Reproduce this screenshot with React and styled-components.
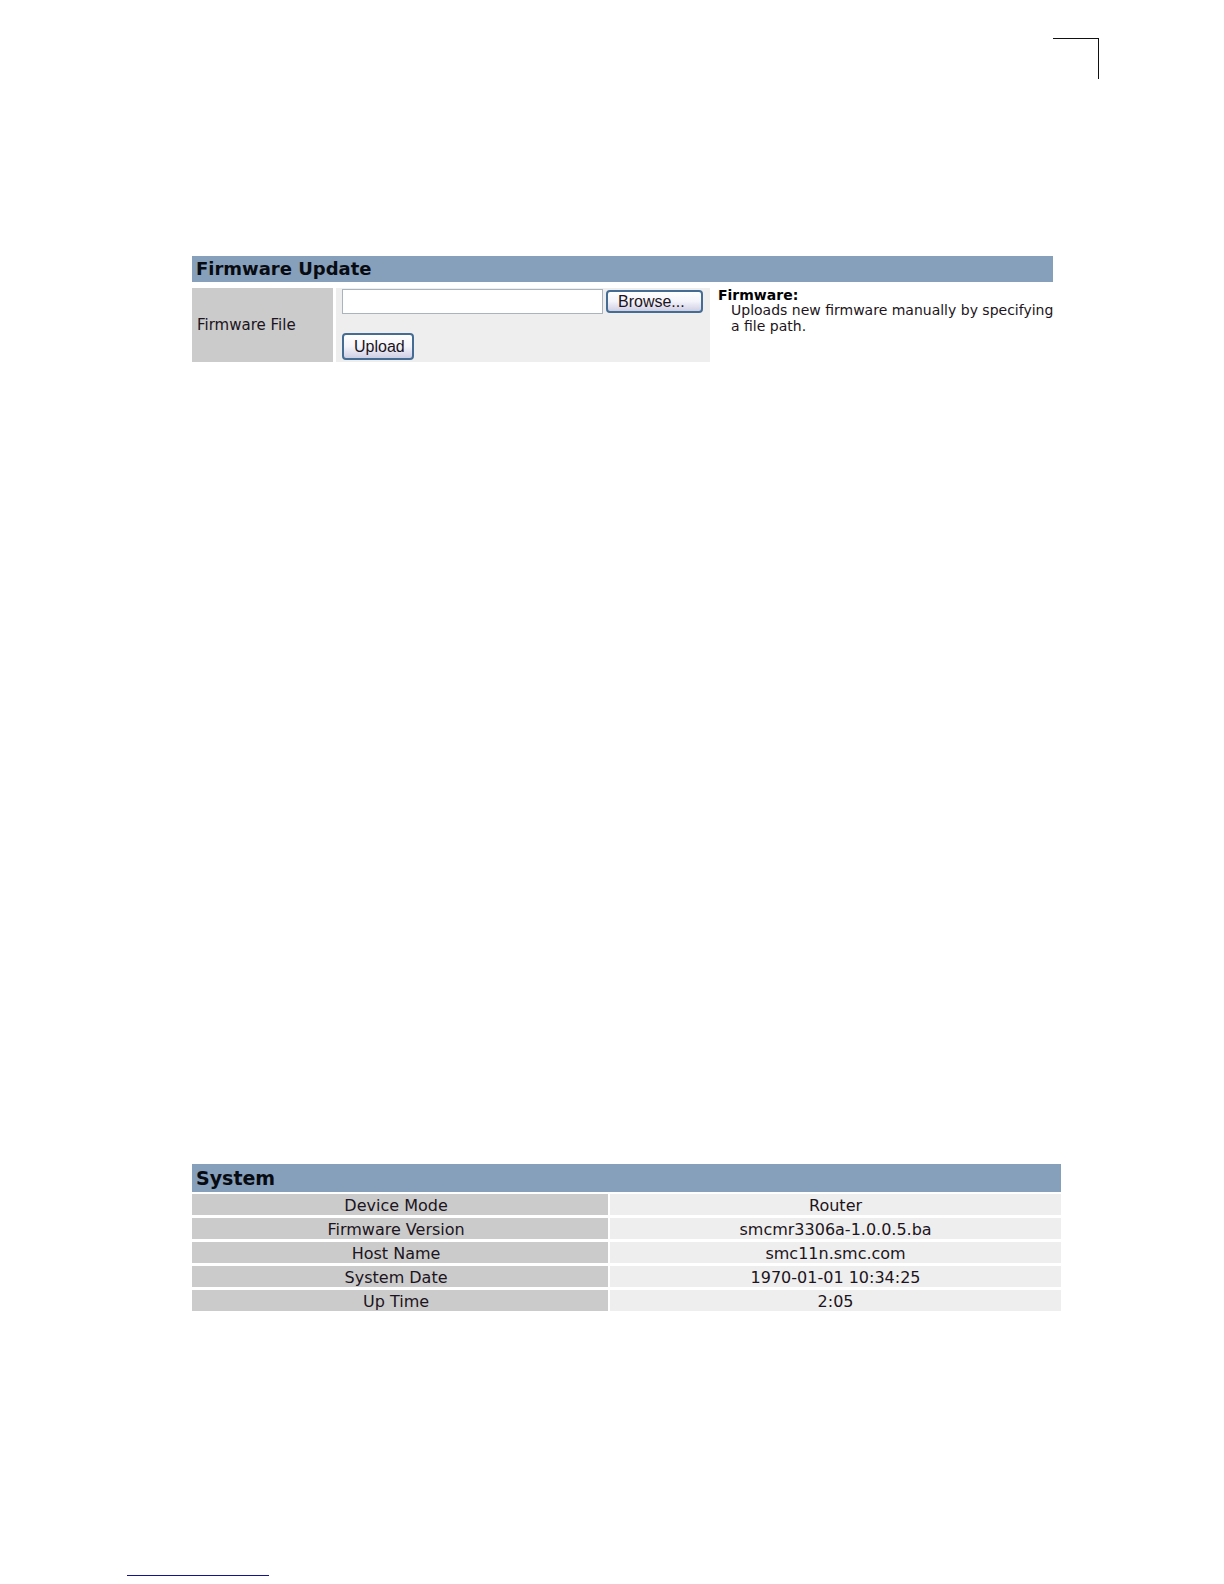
import React, { useRef, useState } from "react";
import styled, { createGlobalStyle } from "styled-components";

const GlobalStyle = createGlobalStyle`
  *, *::before, *::after { box-sizing: border-box; }
  body {
    margin: 0;
    background: #fff;
    color: #1c1420;
    font-family: "DejaVu Sans", Verdana, sans-serif;
  }
`;

const Page = styled.div`
  display: flex;
  flex-direction: column;
  padding: 38px 125px 8px 126px;
`;

const CropMark = styled.div`
  align-self: flex-end;
  width: 46px;
  height: 41px;
  border-top: 1px solid #111;
  border-right: 1px solid #111;
`;

const Section = styled.section`
  margin: ${({ $top }) => $top}px ${({ $right }) => $right}px 0 66px;
`;

const Heading = styled.h2`
  margin: 0;
  padding: 0 4px;
  background: #869fbb;
  color: #080c12;
  font-size: ${({ $size }) => $size}px;
  line-height: ${({ $line }) => $line}px;
`;

const UpdateRow = styled.form`
  display: grid;
  grid-template-columns: 141px 374px 1fr;
  column-gap: 3px;
  margin-top: 6px;
`;

const FieldLabel = styled.label`
  display: flex;
  align-items: center;
  padding: 0 5px;
  background: #cbcbcb;
  font-size: 15px;
  line-height: 20px;
`;

const FieldBody = styled.div`
  display: flex;
  flex-direction: column;
  align-items: flex-start;
  gap: 19px;
  padding: 1px 7px 2px 6px;
  background: #eee;
`;

const FileLine = styled.div`
  display: flex;
  align-items: center;
  align-self: stretch;
  gap: 3px;
`;

const PathInput = styled.input`
  flex: 1;
  min-width: 0;
  height: 25px;
  padding: 0 4px;
  border: 1px solid #a9b4bf;
  background: #fff;
  font: 16px "Liberation Sans", Arial, sans-serif;
`;

const Button = styled.button`
  width: ${({ $width }) => $width}px;
  height: ${({ $height }) => $height}px;
  padding: 0 10px;
  border: 2px solid #456d94;
  border-radius: 4px;
  background: linear-gradient(#fff, #f3f3fa 50%, #cfcfe4);
  color: #1c1420;
  font: 16px/18px "Liberation Sans", Arial, sans-serif;
  text-align: left;
`;

const Help = styled.dl`
  margin: 0;
  padding-left: 5px;
  font-size: 14px;
  line-height: 16px;
  white-space: nowrap;
`;

const HelpTerm = styled.dt`
  color: #000;
  font-weight: bold;
  line-height: 14px;
`;

const HelpText = styled.dd`
  margin: 0 0 0 13px;
`;

const StatusTable = styled.table`
  width: 100%;
  margin-top: 2px;
  border-collapse: collapse;
  table-layout: fixed;
  font-size: 16px;
  line-height: 19px;
  text-align: center;
`;

const StatusRow = styled.tr`
  & + & { border-top: 3px solid #fff; }
`;

const StatusName = styled.th`
  width: 48%;
  padding: 2px 8px 0 0;
  border-right: 2px solid #fff;
  background: #cbcbcb;
  font-weight: normal;
`;

const StatusValue = styled.td`
  padding: 2px 0 0;
  background: #eee;
`;

const FootRule = styled.hr`
  width: 142px;
  margin: 264px 0 0 1px;
  border: 0;
  border-top: 1px solid #14148c;
`;

const status = [
  ["Device Mode", "Router"],
  ["Firmware Version", "smcmr3306a-1.0.0.5.ba"],
  ["Host Name", "smc11n.smc.com"],
  ["System Date", "1970-01-01 10:34:25"],
  ["Up Time", "2:05"],
];

export default function App() {
  const [path, setPath] = useState("");
  const picker = useRef(null);

  return (
    <>
      <GlobalStyle />
      <Page>
        <CropMark />
        <Section $top={177} $right={46}>
          <Heading $size={18} $line={26}>Firmware Update</Heading>
          <UpdateRow onSubmit={(e) => e.preventDefault()}>
            <FieldLabel htmlFor="firmware-path">Firmware File</FieldLabel>
            <FieldBody>
              <FileLine>
                <PathInput
                  id="firmware-path"
                  type="text"
                  value={path}
                  onChange={(e) => setPath(e.target.value)}
                />
                <Button type="button" $width={97} $height={23} onClick={() => picker.current.click()}>
                  Browse...
                </Button>
                <input
                  ref={picker}
                  type="file"
                  hidden
                  aria-label="Firmware file"
                  onChange={(e) => setPath(e.target.files[0]?.name ?? "")}
                />
              </FileLine>
              <Button type="submit" $width={72} $height={27}>Upload</Button>
            </FieldBody>
            <Help>
              <HelpTerm>Firmware:</HelpTerm>
              <HelpText>
                Uploads new firmware manually by specifying
                <br />a file path.
              </HelpText>
            </Help>
          </UpdateRow>
        </Section>
        <Section $top={802} $right={38}>
          <Heading $size={19} $line={28}>System</Heading>
          <StatusTable>
            <tbody>
              {status.map(([name, value]) => (
                <StatusRow key={name}>
                  <StatusName scope="row">{name}</StatusName>
                  <StatusValue>{value}</StatusValue>
                </StatusRow>
              ))}
            </tbody>
          </StatusTable>
        </Section>
        <FootRule />
      </Page>
    </>
  );
}
